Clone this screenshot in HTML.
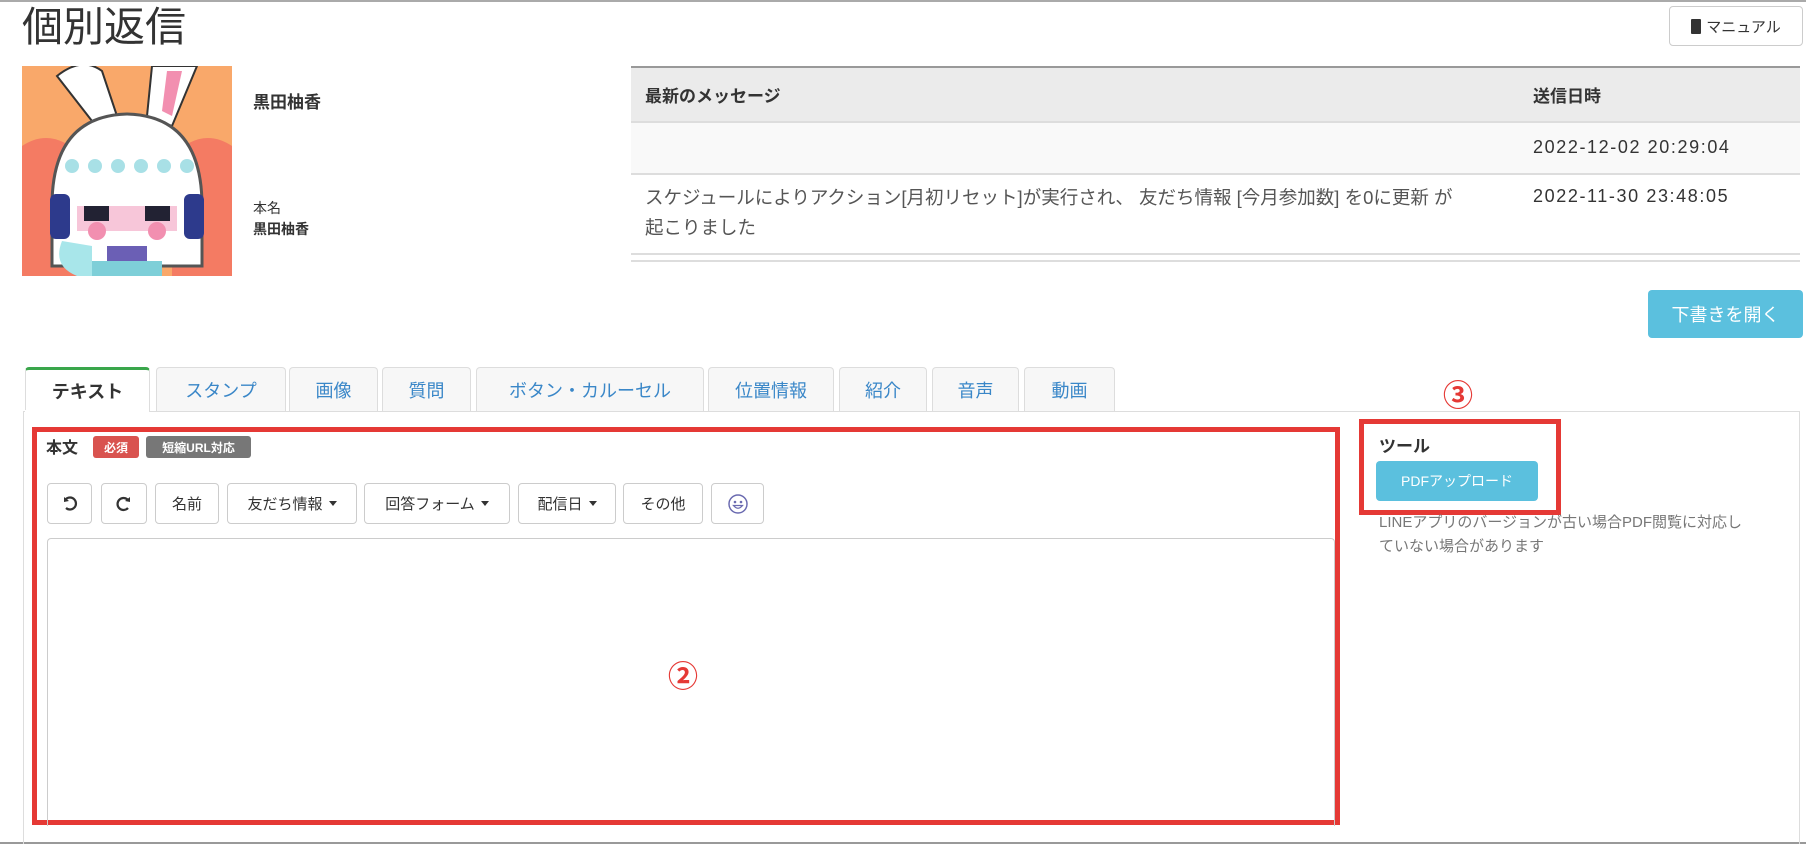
<!DOCTYPE html>
<html><head><meta charset="utf-8"><style>
*{box-sizing:border-box;margin:0;padding:0}
body{width:1806px;height:844px;position:relative;background:#fff;font-family:"Liberation Sans","Noto Sans CJK JP",sans-serif;color:#333;overflow:hidden}
.a{position:absolute}
.btn{position:absolute;border:1px solid #ccc;border-radius:4px;background:#fff;font-size:15px;color:#333;display:flex;align-items:center;justify-content:center}
.tab{position:absolute;top:367px;height:44px;border:1px solid #ddd;border-bottom:none;border-radius:4px 4px 0 0;background:#f7f7f7;color:#3a87c8;font-size:18px;display:flex;align-items:center;justify-content:center}
.caret{display:inline-block;width:0;height:0;border-left:4px solid transparent;border-right:4px solid transparent;border-top:5px solid #333;margin-left:6px}
.dt{font-size:18px;letter-spacing:1.6px}
</style></head><body>
<div class="a" style="left:0;top:0;width:1806px;height:2px;background:#aaa"></div>
<div class="a" style="left:0;top:842px;width:1806px;height:2px;background:#999"></div>
<div class="a" style="left:22px;top:2px;font-size:41px;color:#333;line-height:50px">個別返信</div>
<div class="btn" style="left:1669px;top:6px;width:134px;height:40px;font-size:15px"><span style="display:inline-block;width:10px;height:15px;background:#333;border-radius:1px;margin-right:5px"></span>マニュアル</div>

<svg class="a" style="left:22px;top:66px" width="210" height="210" viewBox="0 0 210 210">
<rect width="210" height="210" fill="#f9a86a"/>
<path d="M0 80 Q30 60 60 90 L60 210 L0 210Z" fill="#f47b63"/>
<path d="M210 80 Q180 60 150 90 L150 210 L210 210Z" fill="#f47b63"/>
<path d="M35 10 Q60 -10 80 5 L95 50 L70 55Z" fill="#fff" stroke="#333" stroke-width="2"/>
<path d="M125 50 L130 0 L175 0 L150 60Z" fill="#fff" stroke="#333" stroke-width="2"/>
<path d="M140 45 L145 5 L160 5 L150 50Z" fill="#f28fb0"/>
<path d="M30 140 Q30 50 105 48 Q180 50 180 140 L180 200 L30 200Z" fill="#fff" stroke="#555" stroke-width="3"/>
<g fill="#a8e0e6"><circle cx="50" cy="100" r="7"/><circle cx="73" cy="100" r="7"/><circle cx="96" cy="100" r="7"/><circle cx="119" cy="100" r="7"/><circle cx="142" cy="100" r="7"/><circle cx="165" cy="100" r="7"/></g>
<rect x="55" y="140" width="100" height="25" fill="#f7c6d9"/>
<rect x="62" y="140" width="25" height="15" fill="#223"/><rect x="123" y="140" width="25" height="15" fill="#223"/>
<circle cx="75" cy="165" r="9" fill="#f28fb0"/><circle cx="135" cy="165" r="9" fill="#f28fb0"/>
<rect x="28" y="128" width="20" height="45" rx="6" fill="#2d3a8c"/><rect x="162" y="128" width="20" height="45" rx="6" fill="#2d3a8c"/>
<path d="M40 175 Q30 200 55 210 L70 210 L70 180Z" fill="#a8e6ea"/>
<rect x="85" y="180" width="40" height="30" fill="#6b5fb5"/>
<rect x="70" y="195" width="70" height="15" fill="#7ecfd8"/>
</svg>

<div class="a" style="left:253px;top:88px;font-size:17px;font-weight:bold">黒田柚香</div>
<div class="a" style="left:253px;top:198px;font-size:14px">本名</div>
<div class="a" style="left:253px;top:219px;font-size:14px;font-weight:bold">黒田柚香</div>

<div class="a" style="left:631px;top:66px;width:1169px;height:57px;background:#ebebeb;border-top:2px solid #999;border-bottom:2px solid #ddd"></div>
<div class="a" style="left:645px;top:82px;font-size:17px;font-weight:bold">最新のメッセージ</div>
<div class="a" style="left:1533px;top:82px;font-size:17px;font-weight:bold">送信日時</div>
<div class="a" style="left:631px;top:123px;width:1169px;height:52px;background:#f9f9f9;border-bottom:2px solid #ddd"></div>
<div class="a dt" style="left:1533px;top:137px">2022-12-02 20:29:04</div>
<div class="a" style="left:645px;top:183px;font-size:18.5px;color:#555;line-height:30px;width:890px;white-space:nowrap">スケジュールによりアクション[月初リセット]が実行され、 友だち情報 [今月参加数] を0に更新 が<br>起こりました</div>
<div class="a dt" style="left:1533px;top:186px">2022-11-30 23:48:05</div>
<div class="a" style="left:631px;top:253px;width:1169px;height:9px;border-top:2px solid #ddd;border-bottom:2px solid #ddd"></div>

<div class="a" style="left:1648px;top:290px;width:155px;height:48px;background:#5bc0de;border-radius:4px;color:#fff;font-size:18px;display:flex;align-items:center;justify-content:center">下書きを開く</div>

<div class="tab" style="left:25px;width:125px;background:#fff;color:#333;border-top:3px solid #3aa64b;height:45px;font-weight:bold">テキスト</div>
<div class="tab" style="left:156px;width:130px">スタンプ</div>
<div class="tab" style="left:289px;width:89px">画像</div>
<div class="tab" style="left:382px;width:89px">質問</div>
<div class="tab" style="left:476px;width:228px">ボタン・カルーセル</div>
<div class="tab" style="left:708px;width:126px">位置情報</div>
<div class="tab" style="left:839px;width:88px">紹介</div>
<div class="tab" style="left:932px;width:87px">音声</div>
<div class="tab" style="left:1024px;width:91px">動画</div>

<div class="a" style="left:23px;top:411px;width:1777px;height:433px;border:1px solid #ddd;border-bottom:none"></div>
<div class="a" style="left:25px;top:410px;width:124px;height:3px;background:#fff"></div>

<div class="a" style="left:32px;top:427px;width:1308px;height:398px;border:5px solid #e53935"></div>
<div class="a" style="left:46px;top:434px;font-size:16px;font-weight:bold">本文</div>
<div class="a" style="left:93px;top:436px;width:46px;height:22px;background:#d9534f;border-radius:3px;color:#fff;font-size:12px;font-weight:bold;display:flex;align-items:center;justify-content:center">必須</div>
<div class="a" style="left:146px;top:436px;width:105px;height:22px;background:#777;border-radius:3px;color:#fff;font-size:12px;font-weight:bold;display:flex;align-items:center;justify-content:center">短縮URL対応</div>

<div class="btn" style="left:47px;top:483px;width:45px;height:41px"><svg width="16" height="16" viewBox="0 0 16 16"><path d="M4 3 A6 6 0 1 1 4 12" fill="none" stroke="#333" stroke-width="2.2"/><path d="M2 1 L2 6 L7 5Z" fill="#333"/></svg></div>
<div class="btn" style="left:101px;top:483px;width:46px;height:41px"><svg width="16" height="16" viewBox="0 0 16 16"><path d="M12 4 A6 6 0 1 0 12 12" fill="none" stroke="#333" stroke-width="2.2"/><path d="M14 1 L14 6 L9 5Z" fill="#333"/></svg></div>
<div class="btn" style="left:155px;top:483px;width:64px;height:41px">名前</div>
<div class="btn" style="left:227px;top:483px;width:130px;height:41px">友だち情報<span class="caret"></span></div>
<div class="btn" style="left:364px;top:483px;width:146px;height:41px">回答フォーム<span class="caret"></span></div>
<div class="btn" style="left:518px;top:483px;width:98px;height:41px">配信日<span class="caret"></span></div>
<div class="btn" style="left:623px;top:483px;width:80px;height:41px">その他</div>
<div class="btn" style="left:711px;top:483px;width:53px;height:41px"><svg width="22" height="22" viewBox="0 0 22 22"><circle cx="11" cy="11" r="9" fill="none" stroke="#6a6ab0" stroke-width="1.5"/><circle cx="8" cy="9" r="1.3" fill="#6a6ab0"/><circle cx="14" cy="9" r="1.3" fill="#6a6ab0"/><path d="M6.5 12.5 Q11 18 15.5 12.5Z" fill="none" stroke="#6a6ab0" stroke-width="1.3"/></svg></div>

<div class="a" style="left:47px;top:538px;width:1288px;height:288px;border:1px solid #ccc;border-bottom:none;border-radius:4px 4px 0 0"></div>
<div class="a" style="left:668px;top:652px;font-size:30px;font-weight:bold;color:#e53935">②</div>

<div class="a" style="left:1443px;top:371px;font-size:30px;font-weight:bold;color:#e53935">③</div>
<div class="a" style="left:1359px;top:419px;width:202px;height:96px;border:5px solid #e53935"></div>
<div class="a" style="left:1379px;top:432px;font-size:17px;font-weight:bold">ツール</div>
<div class="a" style="left:1376px;top:461px;width:162px;height:40px;background:#5bc0de;border-radius:4px;color:#fff;font-size:14px;display:flex;align-items:center;justify-content:center">PDFアップロード</div>
<div class="a" style="left:1379px;top:511px;width:420px;font-size:15px;color:#777;line-height:24px;white-space:nowrap">LINEアプリのバージョンが古い場合PDF閲覧に対応し<br>ていない場合があります</div>
</body></html>
